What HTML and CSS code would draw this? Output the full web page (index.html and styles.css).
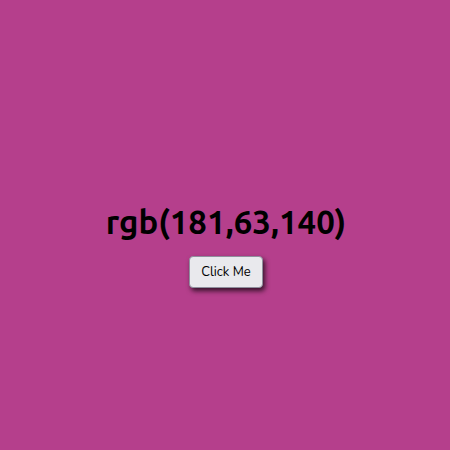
FILE: index.html
```html
<!DOCTYPE html>
<html lang="en">
<head>
<meta charset="utf-8">
<title>Random Color</title>
<link rel="stylesheet" href="styles.css">
</head>
<body>
<main class="container">
<h1 class="color-label">rgb(181,63,140)</h1>
<button class="color-button" type="button">Click Me</button>
</main>
</body>
</html>
```

FILE: styles.css
```css
body {
  margin: 0;
  background: rgb(181, 63, 140);
  font-family: Ubuntu, "Noto Sans", sans-serif;
}

.container {
  box-sizing: border-box;
  min-height: 100vh;
  padding: 40px 0 0 2px;
  display: flex;
  flex-direction: column;
  align-items: center;
  justify-content: center;
  gap: 14px;
}

.color-label {
  margin: 0;
  color: #000;
  font-size: 33px;
  line-height: 40px;
}

.color-button {
  padding: 6px 11px;
  border: 1px solid #8f8f9d;
  border-radius: 4px;
  background: #e9e9ed;
  color: #000;
  font-family: Nunito, "Open Sans", sans-serif;
  font-size: 13px;
  line-height: 18px;
  box-shadow: 2px 3px 5px rgba(0, 0, 0, 0.7);
}
```
